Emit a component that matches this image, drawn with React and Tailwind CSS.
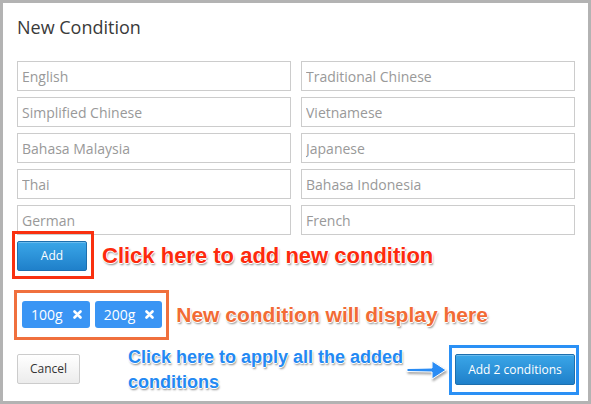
import React from 'react';

const languages = [
  ['English', 'Traditional Chinese'],
  ['Simplified Chinese', 'Vietnamese'],
  ['Bahasa Malaysia', 'Japanese'],
  ['Thai', 'Bahasa Indonesia'],
  ['German', 'French'],
];

const tags = ['100g', '200g'];

// white halo + soft drop shadow, like the annotation tool draws it
const note =
  "font-['Liberation_Sans',Arial,sans-serif] font-bold whitespace-nowrap [text-shadow:1px_0_0_#fff,-1px_0_0_#fff,0_1px_0_#fff,0_-1px_0_#fff,1px_2px_2px_rgba(0,0,0,0.45)]";

const RemoveIcon = () => (
  <svg width="9" height="9" viewBox="0 0 9 9" className="shrink-0">
    <path d="M1.5 1.5 L7.5 7.5 M7.5 1.5 L1.5 7.5" stroke="#fff" strokeWidth="2.6" strokeLinecap="round" />
  </svg>
);

const Arrow = () => (
  <svg width="44" height="24" viewBox="0 0 44 24" className="drop-shadow-[1px_2px_1px_rgba(0,0,0,0.35)]">
    <path
      d="M1 10.5 L26 10 L26 3 L40 12 L26 21 L26 14 L1 13.5 Z"
      fill="#2a8cf4"
      stroke="#fff"
      strokeWidth="1"
      strokeLinejoin="round"
    />
  </svg>
);

export default function App() {
  return (
    <div className="w-[591px] h-[404px] border-[3px] border-[#b3b3b3] bg-white pl-[14px] pr-[13px] pt-[12px] font-['Open_Sans',sans-serif] text-[#333]">
      <h2 className="text-[18px] leading-[24px] text-[#3a3a3a]">New Condition</h2>

      <div className="mt-[22px] grid grid-cols-2 gap-x-[10px] gap-y-[6px]">
        {languages.flat().map((lang) => (
          <input
            key={lang}
            placeholder={lang}
            className="h-[30px] w-full border border-[#ccc] bg-white pl-[4px] text-[14px] outline-none placeholder:text-[#999]"
          />
        ))}
      </div>

      {/* add row */}
      <div className="-mt-[4px] -ml-[5px] flex items-center">
        <div className="border-[3px] border-[#f9300f] pl-[2px] pr-[4px] pt-[7px] pb-[5px]">
          <button className="h-[30px] w-[70px] rounded-[2px] border border-[#1d6fae] bg-gradient-to-b from-[#3aa6e8] to-[#1f80ca] text-[12px] text-white shadow-[inset_0_1px_0_rgba(255,255,255,0.25)]">
            Add
          </button>
        </div>
        <span className={`ml-[8px] text-[22px] text-[#fd2a0d] ${note}`}>Click here to add new condition</span>
      </div>

      {/* tags row */}
      <div className="mt-[11px] -ml-[3px] flex items-center">
        <div className="flex gap-[5px] border-[3px] border-[#f0703d] pl-[5px] pr-[4px] pt-[8px] pb-[9px]">
          {tags.map((t) => (
            <span
              key={t}
              className="flex h-[27px] items-center gap-[10px] rounded-[3px] bg-[#3a95f4] pl-[9px] pr-[8px] text-[14px] text-white"
            >
              {t}
              <RemoveIcon />
            </span>
          ))}
        </div>
        <span className={`ml-[7px] text-[21px] text-[#f26b35] ${note}`}>New condition will display here</span>
      </div>

      {/* footer */}
      <div className="relative mt-[5px] -mr-[4px] flex items-start">
        <button className="mt-[9px] h-[30px] w-[63px] rounded-[2px] border border-[#ccc] bg-gradient-to-b from-white to-[#ececec] text-[12px] text-[#333]">
          Cancel
        </button>
        <div className={`ml-[48px] text-[18px] leading-[25px] text-[#2389f3] ${note}`}>
          Click here to apply all the added
          <br />
          conditions
        </div>
        <div className="absolute left-[389px] top-[13px]">
          <Arrow />
        </div>
        <div className="ml-auto border-[3px] border-[#2a90f5] pl-[3px] pr-[1px] pt-[6px] pb-[7px]">
          <button className="h-[31px] w-[120px] rounded-[2px] border border-[#1d6fae] bg-gradient-to-b from-[#3aa6e8] to-[#1f80ca] text-[12px] text-white shadow-[inset_0_1px_0_rgba(255,255,255,0.25)]">
            Add 2 conditions
          </button>
        </div>
      </div>
    </div>
  );
}
